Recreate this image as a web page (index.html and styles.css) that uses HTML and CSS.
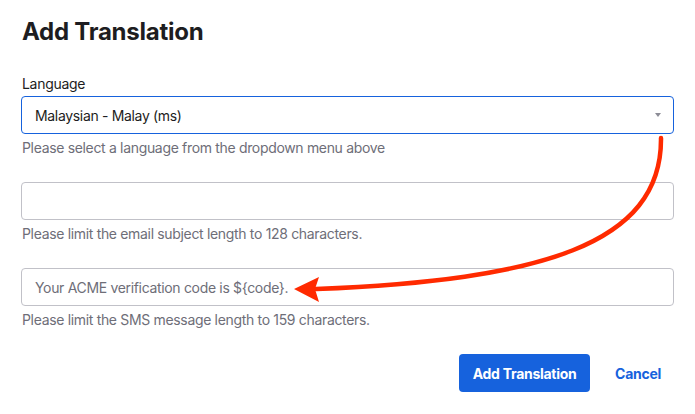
FILE: index.html
```html
<!DOCTYPE html>
<html lang="en">
<head>
<meta charset="utf-8">
<title>Add Translation</title>
<link rel="stylesheet" href="styles.css">
</head>
<body>
<div class="dialog">
  <h1 class="title">Add Translation</h1>
  <form class="form">
    <div class="field">
      <label class="label">Language</label>
      <div class="select">
        <span class="select-value">Malaysian - Malay (ms)</span>
        <span class="caret"></span>
      </div>
      <p class="help">Please select a language from the dropdown menu above</p>
    </div>
    <div class="field">
      <div class="input"></div>
      <p class="help">Please limit the email subject length to 128 characters.</p>
    </div>
    <div class="field">
      <div class="input"><span class="input-text">Your ACME verification code is ${code}.</span></div>
      <p class="help">Please limit the SMS message length to 159 characters.</p>
    </div>
    <div class="actions">
      <button type="button" class="btn-primary">Add Translation</button>
      <button type="button" class="btn-link">Cancel</button>
    </div>
  </form>
  <svg class="annotation" width="695" height="414" viewBox="0 0 695 414">
    <path d="M661 138 C662 245 540 280 316 289" fill="none" stroke="#ff2a00" stroke-width="4.5" stroke-linecap="round"/>
    <path d="M294 289 L319 277 L315 289 L319 302 Z" fill="#ff2a00"/>
  </svg>
</div>
</body>
</html>
```
FILE: styles.css
```css
* { box-sizing: border-box; }
html, body {
  margin: 0;
  padding: 0;
  background: #ffffff;
}
body {
  font-family: Inter, "Noto Sans", "Liberation Sans", sans-serif;
  color: #1d1d21;
  width: 695px;
  height: 414px;
  overflow: hidden;
}
.dialog {
  position: relative;
  padding: 17px 21px 0 21px;
  height: 414px;
}
.title {
  margin: 0 0 0 1px;
  font-size: 24px;
  line-height: 30px;
  font-weight: 700;
  letter-spacing: -0.25px;
  color: #1d1d21;
}
.form {
  margin-top: 27px;
  display: flex;
  flex-direction: column;
}
.field {
  display: flex;
  flex-direction: column;
  margin-bottom: 24px;
}
.label {
  font-size: 14px;
  line-height: 20px;
  letter-spacing: -0.3px;
  margin: 0 0 2px 1px;
  color: #1d1d21;
}
.select, .input {
  height: 38px;
  border: 1px solid #c1c1c8;
  border-radius: 4px;
  display: flex;
  align-items: center;
  padding: 0 12px 0 13px;
  font-size: 14px;
  letter-spacing: -0.33px;
}
.select {
  border-color: #1662dd;
  justify-content: space-between;
}
.select-value { color: #1d1d21; }
.caret {
  width: 0;
  height: 0;
  border-left: 3px solid transparent;
  border-right: 3px solid transparent;
  border-top: 4px solid #8c8c96;
}
.input-text { color: #6e6e78; }
.help {
  margin: 4px 0 0 1px;
  font-size: 14px;
  line-height: 20px;
  letter-spacing: -0.33px;
  color: #6e6e78;
}
.actions {
  margin-top: 0;
  display: flex;
  justify-content: flex-end;
  align-items: center;
  gap: 12px;
  padding-right: 0;
}
.btn-primary {
  height: 38px;
  width: 131px;
  border: 0;
  border-radius: 4px;
  background: #1662dd;
  color: #ffffff;
  font-family: inherit;
  font-size: 14px;
  font-weight: 700;
  letter-spacing: -0.28px;
  padding: 0;
}
.btn-link {
  height: 38px;
  border: 0;
  background: transparent;
  color: #1662dd;
  font-family: inherit;
  font-size: 14px;
  font-weight: 700;
  letter-spacing: -0.28px;
  padding: 0 13px;
}
.annotation {
  position: absolute;
  left: 0;
  top: 0;
  pointer-events: none;
}
```
